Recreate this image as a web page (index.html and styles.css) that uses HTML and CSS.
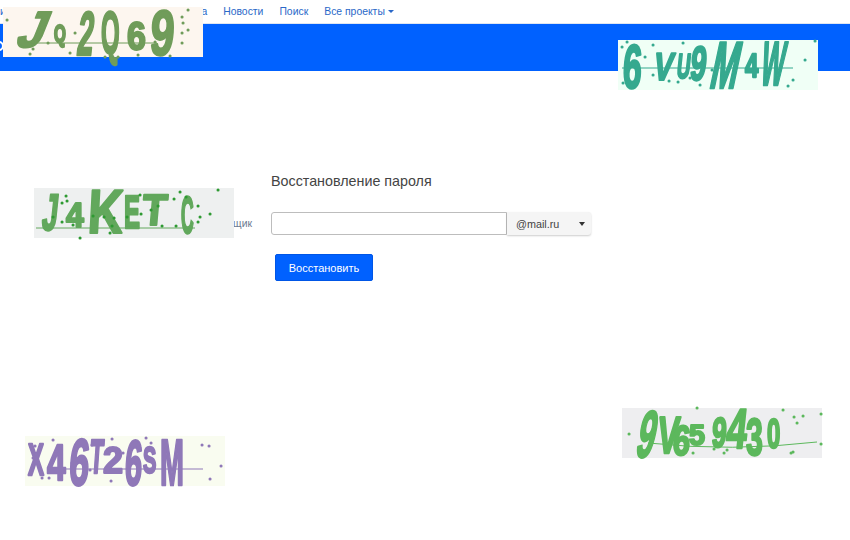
FILE: index.html
```html
<!DOCTYPE html>
<html lang="ru">
<head>
<meta charset="utf-8">
<title>Восстановление пароля</title>
<link rel="stylesheet" href="styles.css">
</head>
<body>
<svg class="defs" width="0" height="0"><defs><filter id="soft" x="-5%" y="-10%" width="110%" height="125%"><feGaussianBlur stdDeviation="0.7"/></filter></defs></svg>
<nav class="topnav">
  <a href="#" class="edge">и</a>
  <a href="#">Почта</a>
  <a href="#">Новости</a>
  <a href="#">Поиск</a>
  <a href="#">Все проекты <span class="caret"></span></a>
</nav>
<header class="banner"><span class="logo-mark"></span></header>
<main class="content">
  <aside class="side"><a href="#">Почтовый ящик</a></aside>
  <section class="recover">
    <h1>Восстановление пароля</h1>
    <div class="field">
      <input class="login" type="text">
      <div class="domain"><span>@mail.ru</span><span class="arrow"></span></div>
    </div>
    <button class="submit" type="button">Восстановить</button>
  </section>
</main>

<svg class="captcha c1" width="200" height="50" viewBox="0 0 200 50">
  <rect class="bg" width="200" height="50"/>
  <g class="ink" filter="url(#soft)">
    <path class="rule" d="M30 36H154"/>
    <text transform="translate(11 40) skewX(-22) scale(1.2 1.27)">J</text>
    <text transform="translate(51 35) scale(.38 .6)">Q</text>
    <text transform="translate(73 48) skewX(-6) scale(.72 1.55)">2</text>
    <text transform="translate(98 46) scale(.6 1.5)">Q</text>
    <text transform="translate(124 43) scale(.85 1.02)">6</text>
    <text transform="translate(146 48) skewX(-4) scale(1.08 1.6)">9</text>
    <path class="dots" d="M4 13h.1M39 21h.1M30 35h.1M45 36h.1M30 42h.1M27 47h.1M67 46h.1M72 26h.1M185 3h.1M179 10h.1M180 16h.1M185 23h.1M179 26h.1M179 36h.1M152 35h.1M135 48h.1M167 49h.1M102 50h.1M115 50h.1"/>
  </g>
</svg>

<svg class="captcha c2" width="200" height="50" viewBox="0 0 200 50">
  <rect class="bg" width="200" height="50"/>
  <g class="ink" filter="url(#soft)">
    <path class="rule" d="M4 28H175"/>
    <text transform="translate(4 48) skewX(-3) scale(.85 1.55)">6</text>
    <text transform="translate(34 40) skewX(-10) scale(.72 .97)">V</text>
    <text transform="translate(58 38) skewX(-6) scale(.46 .86)">U</text>
    <text transform="translate(71 40) skewX(-6) scale(.72 1.2)">9</text>
    <text transform="translate(90 48) skewX(-12) scale(.82 1.65)">M</text>
    <text transform="translate(127 37) scale(.6 .83)">4</text>
    <text transform="translate(141 45) skewX(-8) scale(.62 1.55)">W</text>
    <path class="dots" d="M4 7h.1M9 2h.1M5 43h.1M27 17h.1M35 35h.1M51 41h.1M60 42h.1M72 38h.1M82 45h.1M65 3h.1M94 30h.1M187 20h.1M197 1h.1M175 40h.1M170 46h.1M35 5h.1"/>
  </g>
</svg>

<svg class="captcha c3" width="200" height="50" viewBox="0 0 200 50">
  <rect class="bg" width="200" height="50"/>
  <g class="ink" filter="url(#soft)">
    <path class="rule" d="M2 40H161"/>
    <text transform="translate(7 42) skewX(-6) scale(.7 1.28)">J</text>
    <text transform="translate(32 39) scale(.8 .86)">4</text>
    <text transform="translate(53 45) skewX(-3) scale(1.22 1.55)">K</text>
    <text transform="translate(90 40) scale(.6 1.14)">E</text>
    <text transform="translate(107 37) skewX(-5) scale(1.02 1.1)">T</text>
    <text transform="translate(147 45) scale(.44 1.3)">C</text>
    <path class="dots" d="M32 8h.1M33 13h.1M28 15h.1M19 29h.1M28 34h.1M39 37h.1M59 28h.1M70 29h.1M80 30h.1M78 38h.1M76 45h.1M93 29h.1M106 7h.1M107 26h.1M117 22h.1M124 18h.1M128 38h.1M142 38h.1M140 11h.1M146 4h.1M152 9h.1M164 18h.1M166 29h.1M164 34h.1M176 26h.1M184 2h.1M46 50h.1"/>
  </g>
</svg>

<svg class="captcha c4" width="200" height="50" viewBox="0 0 200 50">
  <rect class="bg" width="200" height="50"/>
  <g class="ink" filter="url(#soft)">
    <path class="rule" d="M28 33H178"/>
    <text transform="translate(3 39) scale(.6 1.1)">X</text>
    <text transform="translate(22 44) scale(.84 1.27)">4</text>
    <text transform="translate(43 49) skewX(-4) scale(.9 1.65)">6</text>
    <text transform="translate(64 37) skewX(-4) scale(.55 1.2)">T</text>
    <text transform="translate(78 37) scale(.9 .9)">2</text>
    <text transform="translate(99 49) skewX(-3) scale(.78 1.6)">6</text>
    <text transform="translate(118 37) scale(.5 .9)">S</text>
    <text transform="translate(135 49) scale(.72 1.6)">M</text>
    <path class="dots" d="M10 10h.1M8 22h.1M28 4h.1M17 42h.1M24 42h.1M47 27h.1M65 34h.1M67 9h.1M87 3h.1M98 17h.1M80 36h.1M86 45h.1M115 12h.1M121 2h.1M126 7h.1M125 36h.1M177 9h.1M184 10h.1M196 30h.1M185 43h.1"/>
  </g>
</svg>

<svg class="captcha c5" width="200" height="50" viewBox="0 0 200 50">
  <rect class="bg" width="200" height="50"/>
  <g class="ink" filter="url(#soft)">
    <path class="rule" d="M26 35Q110 44 195 34"/>
    <text transform="translate(12 49) skewX(-12) scale(.8 1.65)">9</text>
    <text transform="translate(34 45) skewX(-6) scale(.8 1.3)">V</text>
    <text transform="translate(50 47) skewX(-4) scale(.78 1.05)">6</text>
    <text transform="translate(67 37) scale(.72 .72)">5</text>
    <text transform="translate(89 39) skewX(-4) scale(.66 1.05)">9</text>
    <text transform="translate(103 40) skewX(-6) scale(.92 1.4)">4</text>
    <text transform="translate(124 47) scale(.76 1.3)">3</text>
    <text transform="translate(145 40) scale(.6 1.05)">0</text>
    <path class="dots" d="M7 26h.1M75 0h.1M161 2h.1M172 9h.1M181 8h.1M175 15h.1M199 6h.1M199 36h.1M171 44h.1M169 45h.1M46 44h.1M71 45h.1M92 41h.1M105 42h.1M102 45h.1"/>
  </g>
</svg>
</body>
</html>
```
FILE: styles.css
```css
* { box-sizing: border-box; }
html, body { margin: 0; height: 100%; }
body {
  position: relative;
  overflow: hidden;
  background: #fff;
  font-family: "Liberation Sans", Arial, sans-serif;
  font-size: 11px;
  color: #444;
}
.defs { position: absolute; }
.topnav {
  display: flex;
  align-items: center;
  height: 24px;
  gap: 16px;
  border-bottom: 1px solid #dfe6f2;
  font-size: 10.4px;
}
.topnav a { color: #2a68c8; text-decoration: none; line-height: 22px; }
.topnav .edge { margin-right: 156.5px; }
.caret {
  display: inline-block;
  width: 0;
  height: 0;
  vertical-align: 2px;
  border-top: 3px solid #2a68c8;
  border-left: 3px solid transparent;
  border-right: 3px solid transparent;
}
.banner {
  position: relative;
  height: 47px;
  background: #0061ff;
}
.logo-mark {
  position: absolute;
  left: -6px;
  top: 17px;
  width: 10px;
  height: 10px;
  border: 2px solid #fff;
  border-radius: 50%;
}
.content {
  display: flex;
  padding-top: 102px;
}
.side {
  width: 252px;
  padding-top: 45px;
  text-align: right;
  font-size: 10.4px;
}
.side a { color: #6b7a90; text-decoration: none; }
.recover { margin-left: 19px; }
h1 {
  margin: 0;
  font-size: 14.3px;
  font-weight: 400;
  line-height: 17px;
  color: #444;
}
.field {
  display: flex;
  width: 320px;
  height: 23px;
  margin-top: 22px;
}
.login {
  width: 236px;
  height: 23px;
  padding: 0 4px;
  border: 1px solid #bdbdbd;
  border-radius: 3px 0 0 3px;
  background: #fff;
  outline: none;
}
.domain {
  display: flex;
  justify-content: space-between;
  align-items: center;
  width: 84px;
  padding: 0 6px 0 9px;
  border-radius: 0 3px 3px 0;
  background: #f5f5f5;
  box-shadow: 0 1px 2px rgba(0, 0, 0, 0.2);
  font-size: 10.8px;
  color: #444;
}
.arrow {
  width: 0;
  height: 0;
  border-top: 4px solid #333;
  border-left: 3px solid transparent;
  border-right: 3px solid transparent;
}
.submit {
  display: block;
  width: 98px;
  height: 27px;
  margin: 19px 0 0 4px;
  padding: 0;
  border: 1px solid #0056e6;
  border-radius: 2px;
  background: #0061ff;
  color: #fff;
  font: 11px "Liberation Sans", Arial, sans-serif;
}
.captcha { position: absolute; display: block; overflow: visible; }
.captcha text {
  font-family: "Liberation Sans", Arial, sans-serif;
  font-size: 40px;
  font-weight: 700;
  stroke-linejoin: round;
  stroke-width: 2px;
  vector-effect: non-scaling-stroke;
}
.ink .rule { fill: none; stroke-width: 1px; }
.ink .dots { fill: none; stroke-width: 3px; stroke-linecap: round; }
.c1 { left: 3px; top: 7px; }
.c1 .bg { fill: #fdf6ef; }
.c1 text { fill: #6f9c5a; stroke: #6f9c5a; }
.c1 .rule, .c1 .dots { stroke: #6f9c5a; }
.c2 { left: 618px; top: 40px; }
.c2 .bg { fill: #f0fff6; }
.c2 text { fill: #35a98f; stroke: #35a98f; }
.c2 .rule, .c2 .dots { stroke: #35a98f; }
.c3 { left: 34px; top: 188px; }
.c3 .bg { fill: #eef0f0; }
.c3 text { fill: #62a85c; stroke: #62a85c; }
.c3 .rule { stroke: #62a85c; }
.c3 .dots { stroke: #2e9a33; }
.c4 { left: 25px; top: 436px; }
.c4 .bg { fill: #f9fcf0; }
.c4 text { fill: #8f78b8; stroke: #8f78b8; }
.c4 .rule, .c4 .dots { stroke: #8f78b8; }
.c5 { left: 622px; top: 408px; }
.c5 .bg { fill: #eeeef0; }
.c5 text { fill: #5cb85c; stroke: #5cb85c; }
.c5 .rule, .c5 .dots { stroke: #5cb85c; }
```
